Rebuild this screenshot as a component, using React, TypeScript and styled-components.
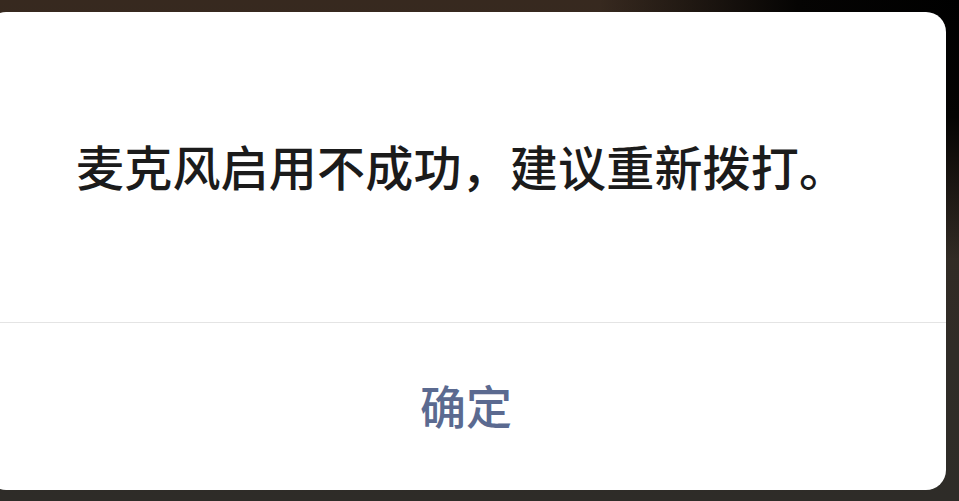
import React from 'react';
import styled, { createGlobalStyle } from 'styled-components';

const GlobalStyle = createGlobalStyle`
  html, body {
    margin: 0;
    padding: 0;
    background: #2e2b27;
  }
  * {
    box-sizing: border-box;
  }
`;

// dimmed call screen behind the alert
const Backdrop = styled.div`
  width: 959px;
  height: 501px;
  overflow: hidden;
  padding-top: 12px;
  background:
    radial-gradient(ellipse 360px 260px at 100% 0%, #000 0%, #050403 45%, rgba(5, 4, 3, 0) 100%),
    linear-gradient(180deg, #37291f 0%, #332a22 30%, #302c27 70%, #2e2c28 100%);
  font-family: "Noto Sans CJK SC", "Noto Sans", sans-serif;
`;

const Dialog = styled.div`
  margin-left: -14px;
  width: 960px;
  height: 478px;
  background: #fff;
  border-radius: 20px;
  display: flex;
  flex-direction: column;
`;

const Message = styled.div`
  height: 311px;
  display: flex;
  align-items: center;
  padding: 0 0 4px 90px;
  border-bottom: 1px solid #e4e4e4;
  color: #1b1b1b;
  font-size: 48px;
  font-weight: 500;
  letter-spacing: 0.2px;
`;

const ActionButton = styled.button`
  flex: 1;
  border: none;
  background: transparent;
  display: flex;
  align-items: center;
  justify-content: center;
  padding: 0 0 6px;
  font-family: inherit;
  font-size: 46px;
  font-weight: 500;
  color: #5b6a90;
  cursor: pointer;
`;

export default function App() {
  return (
    <>
      <GlobalStyle />
      <Backdrop>
        <Dialog>
          <Message>麦克风启用不成功，建议重新拨打。</Message>
          <ActionButton>确定</ActionButton>
        </Dialog>
      </Backdrop>
    </>
  );
}
